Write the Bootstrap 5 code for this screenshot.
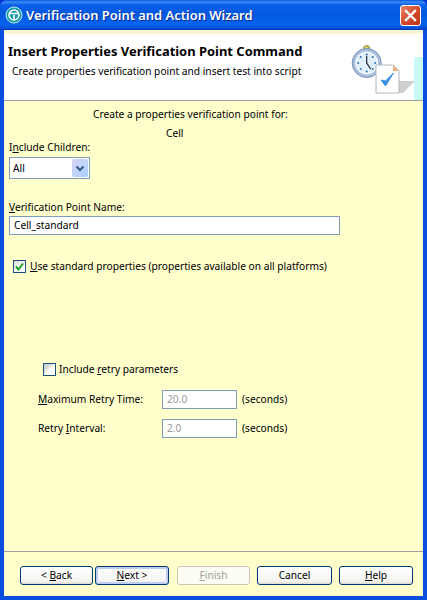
<!DOCTYPE html>
<html lang="en">
<head>
<meta charset="utf-8">
<title>Verification Point and Action Wizard</title>
<link href="https://cdn.jsdelivr.net/npm/bootstrap@5.3.0/dist/css/bootstrap.min.css" rel="stylesheet">
<style>
html,body{margin:0;background:#0831d9;}
body{width:427px;height:600px;overflow:hidden;font-family:"Noto Sans","Liberation Sans",sans-serif;font-size:10.2px;line-height:13px;color:#000;}
.xp-window{width:427px;height:600px;background:#0a4ee0;border-radius:7px 7px 0 0;overflow:hidden;}
.xp-title{height:30px;flex:none;padding:0 6px 0 5px;background:linear-gradient(180deg,#0a58e0 0,#3a8bf5 2px,#0a5fe8 5px,#0458e0 14px,#0663ee 24px,#0650d8 28px,#0336b8 30px);color:#fff;}
.xp-title-text{font-weight:600;font-size:12.95px;text-shadow:1px 1px 0 #0a2a90;margin-left:3px;}
.xp-close{width:21px;height:21px;border:1px solid #fff;border-radius:3px;background:linear-gradient(135deg,#e8846a,#d2482a 55%,#b83518);margin-left:auto;padding:0;}
.xp-frame{flex:1;margin:0 4px 4px 4px;background:#ffffcc;min-height:0;}
.xp-strip{height:4px;background:#fbf6d0;flex:none;}
.xp-head{height:67px;flex:none;background:#fff;border-bottom:1px solid #a0a0a0;position:relative;padding:10px 0 0 4px;}
.xp-head h1{font-size:12.95px;line-height:15px;font-weight:700;margin:0;}
.xp-head p{margin:6px 0 0 4px;line-height:13px;}
.xp-art{position:absolute;right:0;top:8px;width:72px;height:58px;}
.xp-content{flex:1;min-height:0;padding:0 0 0 5px;}
.xp-mt1{margin-top:7px;margin-left:84px;}
.xp-mt2{margin-top:6px;margin-left:157px;}
.xp-l1{margin-top:1px;}
.xp-l2{margin-top:22px;}
.xp-u{text-decoration:underline;text-underline-offset:1px;}
.xp-select{width:81px;height:22px;background:#fff;border:1px solid #7f9db9;margin-top:3px;padding:0 1px 0 3px;}
.xp-arrow{width:16px;height:18px;border-radius:2px;background:linear-gradient(135deg,#d5d0f5,#c3d4fb 50%,#a9cdf9);margin-left:auto;}
.xp-input{display:block;height:19px;border:1px solid #7f9db9;background:#fff;padding:0 4px 1px;font:inherit;color:#000;border-radius:0;outline:0;}
.xp-name{width:331px;margin-top:2px;}
.xp-check{width:13px;height:13px;border:1px solid #1c5180;background:linear-gradient(135deg,#dcdcd7,#fff 70%);flex:none;}
.xp-check-empty{background:linear-gradient(135deg,#c9c9c4 0,#dcdcd7 35%,#fff 50%);}
.xp-use{margin-top:25px;margin-left:4px;}
.xp-inc{margin-top:90px;margin-left:34px;}
.xp-gap3{gap:3px;}
.xp-retry{margin-top:14px;margin-left:29px;height:19px;}
.xp-retry2{margin-top:10px;}
.xp-retry-label{width:124px;}
.xp-small{width:75px;color:#9a9a9a;}
.xp-sec{margin-left:5px;}
.xp-rule{flex:none;height:1px;background:#a0a0a0;}
.xp-buttons{flex:none;height:44px;padding:14px 0 0 16px;}
.xp-btn{height:19px;background:linear-gradient(180deg,#fff,#f4f4f0 85%,#dcd8cc);border:1px solid #003c74;border-radius:3px;padding:0 0 2px;font:inherit;line-height:14px;color:#000;}
.xp-btn-back{width:73px;}
.xp-btn-next{width:74px;margin-left:2px;box-shadow:inset 0 0 0 2px #c0cdf5;}
.xp-btn-finish{width:73px;margin-left:8px;border-color:#c9c7ba;color:#a0a09a;background:#fdfdf4;}
.xp-btn-cancel{width:75px;margin-left:7px;}
.xp-btn-help{width:74px;margin-left:7px;}
</style>
</head>
<body>
<div class="xp-window d-flex flex-column">
  <div class="xp-title d-flex align-items-center">
    <svg width="18" height="18" viewBox="0 0 18 18" aria-hidden="true"><circle cx="9" cy="9" r="8" fill="#159aa8" stroke="#bfeaf0"/><circle cx="9" cy="9" r="5" fill="none" stroke="#fff" stroke-width="1.6"/><path d="M4 7.5h10M9 9v5" stroke="#fff" stroke-width="1.6"/></svg>
    <span class="xp-title-text">Verification Point and Action Wizard</span>
    <button class="xp-close d-flex align-items-center justify-content-center" type="button" aria-label="Close"><svg width="13" height="13" viewBox="0 0 13 13"><path d="M2 2l9 9M11 2l-9 9" stroke="#fff" stroke-width="2.4" stroke-linecap="square"/></svg></button>
  </div>
  <div class="xp-frame d-flex flex-column">
    <div class="xp-strip"></div>
    <div class="xp-head">
      <h1>Insert Properties Verification Point Command</h1>
      <p>Create properties verification point and insert test into script</p>
      <svg class="xp-art" viewBox="0 0 72 58" aria-hidden="true">
        <path d="M63 15h9v43h-9z" fill="#c8fafa"/>
        <path d="M48 39h16l-12 12h-4z" fill="#cfcfcf"/>
        <path d="M15.5 8v3" stroke="#8f8a40" stroke-width="2"/>
        <ellipse cx="15.7" cy="6" rx="3" ry="2.4" fill="#d6c860" stroke="#8f8a40"/>
        <circle cx="15.7" cy="21" r="14.5" fill="#a8c0dc" stroke="#7a8fb5"/>
        <circle cx="15.7" cy="21" r="11" fill="#dff0fb" stroke="#fff"/>
        <g fill="#2a6fb0"><circle cx="15.7" cy="12.5" r="1"/><circle cx="15.7" cy="29.5" r="1"/><circle cx="7.2" cy="21" r="1"/><circle cx="24.2" cy="21" r="1"/><circle cx="9.7" cy="15" r="1"/><circle cx="21.7" cy="15" r="1"/><circle cx="9.7" cy="27" r="1"/><circle cx="21.7" cy="27" r="1"/></g>
        <path d="M15.7 14v7l4 6" fill="none" stroke="#223" stroke-width="1.2"/>
        <path d="M25 23h17l6 6v22H25z" fill="#fff" stroke="#b0b8c0"/>
        <path d="M42 23l6 6h-6z" fill="#f0b080"/>
        <path d="M30 38l4.5 6 8-13-8 8z" fill="#3a8fe0" stroke="#3a8fe0"/>
      </svg>
    </div>
    <div class="xp-content d-flex flex-column">
      <div class="xp-mt1">Create a properties verification point for:</div>
      <div class="xp-mt2">Cell</div>
      <div class="xp-l1">I<span class="xp-u">n</span>clude Children:</div>
      <div class="xp-select d-flex align-items-center">All
        <span class="xp-arrow d-flex align-items-center justify-content-center"><svg width="10" height="7" viewBox="0 0 10 7"><path d="M1.5 1.5L5 5l3.5-3.5" fill="none" stroke="#2f5d8c" stroke-width="2"/></svg></span>
      </div>
      <div class="xp-l2"><span class="xp-u">V</span>erification Point Name:</div>
      <input class="xp-input xp-name" value="Cell_standard" aria-label="Verification Point Name">
      <div class="xp-use d-flex align-items-center gap-1">
        <span class="xp-check d-flex align-items-center justify-content-center"><svg width="11" height="11" viewBox="0 0 11 11"><path d="M2 5.5l2.5 3L9 2.5" fill="none" stroke="#21a121" stroke-width="2"/></svg></span>
        <span><span class="xp-u">U</span>se standard properties (properties available on all platforms)</span>
      </div>
      <div class="xp-inc d-flex align-items-center xp-gap3">
        <span class="xp-check xp-check-empty"></span>
        <span>Include <span class="xp-u">r</span>etry parameters</span>
      </div>
      <div class="xp-retry d-flex align-items-center">
        <span class="xp-retry-label"><span class="xp-u">M</span>aximum Retry Time:</span>
        <input class="xp-input xp-small" value="20.0" disabled aria-label="Maximum Retry Time">
        <span class="xp-sec">(seconds)</span>
      </div>
      <div class="xp-retry xp-retry2 d-flex align-items-center">
        <span class="xp-retry-label">Retry <span class="xp-u">I</span>nterval:</span>
        <input class="xp-input xp-small" value="2.0" disabled aria-label="Retry Interval">
        <span class="xp-sec">(seconds)</span>
      </div>
    </div>
    <div class="xp-rule"></div>
    <div class="xp-buttons d-flex align-items-start">
      <button class="xp-btn xp-btn-back" type="button">&lt; <span class="xp-u">B</span>ack</button>
      <button class="xp-btn xp-btn-next" type="button"><span class="xp-u">N</span>ext &gt;</button>
      <button class="xp-btn xp-btn-finish" type="button"><span class="xp-u">F</span>inish</button>
      <button class="xp-btn xp-btn-cancel" type="button">Cancel</button>
      <button class="xp-btn xp-btn-help" type="button"><span class="xp-u">H</span>elp</button>
    </div>
  </div>
</div>
</body>
</html>
